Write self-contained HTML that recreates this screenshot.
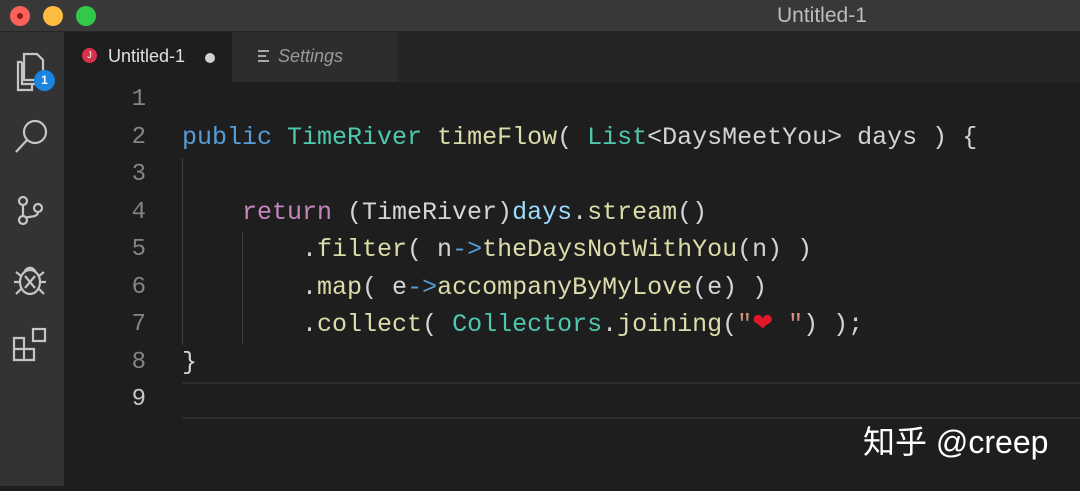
<!DOCTYPE html>
<html><head><style>
*{margin:0;padding:0;box-sizing:border-box}
body{width:1080px;height:486px;overflow:hidden;background:#1e1e1e;font-family:"Liberation Sans",sans-serif;position:relative}
.title{position:absolute;left:0;top:0;width:1080px;height:32px;background:#383838;border-bottom:1px solid #262626}
.dot{position:absolute;top:6px;width:20px;height:20px;border-radius:50%}
.title .t{position:absolute;left:777px;top:4px;color:#bdbdbd;font-size:21px}
.act{position:absolute;left:0;top:32px;width:64px;height:454px;background:#333333}
.tabs{position:absolute;left:64px;top:32px;width:1016px;height:50px;background:#252526}
.tab1{position:absolute;left:0;top:0;width:168px;height:50px;background:#1e1e1e}
.tab2{position:absolute;left:168px;top:0;width:166px;height:50px;background:#2d2d2d}
.code{position:absolute;left:0;top:81px;font-family:"Liberation Mono",monospace;font-size:25px;line-height:37.5px;color:#d4d4d4;white-space:pre}
.ln{position:absolute;left:100px;top:81px;width:46px;text-align:right;font-family:"Liberation Mono",monospace;font-size:24px;line-height:37.5px;color:#858585;white-space:pre}
.k{color:#569cd6}.ty{color:#4ec9b0}.f{color:#dcdcaa}.p{color:#c586c0}.v{color:#9cdcfe}.s{color:#ce9178}
</style></head><body>
<div class="title">
<div class="dot" style="left:10px;background:#fc605b"><div style="position:absolute;left:7px;top:7px;width:6px;height:6px;border-radius:50%;background:#8b1a14"></div></div>
<div class="dot" style="left:43px;background:#fdbc40"></div>
<div class="dot" style="left:76px;background:#34c84a"></div>
<div class="t">Untitled-1</div>
</div>
<div class="act">
<svg width="64" height="454" fill="none" stroke="#c5c5c5" stroke-width="2.2">
<path d="M22 30 V52 H36 M22 30 H18 V58 H32 V52"/>
<path d="M24 22 H37 L43 28 V48 H24 Z"/>
<circle cx="35" cy="100" r="11"/><path d="M27 108 L16 120"/>
<circle cx="23" cy="169" r="4"/><circle cx="23" cy="188" r="4"/><circle cx="38" cy="176" r="4"/><path d="M23 173 V184 M38 180 C38 186 28 184 25 186"/>
<ellipse cx="30" cy="250" rx="10" ry="12"/><path d="M24 241 C26 234 34 234 36 241 M25 244 L35 256 M35 244 L25 256 M14 250 H20 M40 250 H46 M16 240 L21 244 M44 240 L39 244 M16 262 L21 257 M44 262 L39 257"/>
<path d="M14 306 H24 V328 H14 Z M14 317 H34 V328 H24 M24 306 V317"/><rect x="33" y="297" width="12" height="12"/>
</svg>
<div style="position:absolute;left:34px;top:38px;width:21px;height:21px;border-radius:50%;background:#1a85e0;color:#fff;font-size:12px;font-weight:bold;text-align:center;line-height:21px">1</div>
</div>
<div class="tabs">
<div class="tab1">
<div style="position:absolute;left:18px;top:16px;width:15px;height:15px;border-radius:50%;background:#d6324a;color:#fff;font-size:9px;text-align:center;line-height:15px">J</div>
<div style="position:absolute;left:44px;top:14px;color:#e0e0e0;font-size:18px">Untitled-1</div>
<div style="position:absolute;left:141px;top:21px;width:10px;height:10px;border-radius:50%;background:#d0d0d0"></div>
</div>
<div class="tab2">
<div style="position:absolute;left:26px;top:18px;width:11px;height:12px;border-top:2px solid #aaa;border-bottom:2px solid #aaa"><div style="margin-top:3px;width:8px;border-top:2px solid #aaa"></div></div>
<div style="position:absolute;left:46px;top:14px;color:#9a9a9a;font-size:18px;font-style:italic">Settings</div>
</div>
</div>
<div style="position:absolute;left:182px;top:382px;width:898px;height:37px;border-top:2px solid #2c2c2c;border-bottom:2px solid #2c2c2c"></div>
<div style="position:absolute;left:182px;top:158px;width:1px;height:187px;background:#404040"></div>
<div style="position:absolute;left:242px;top:232px;width:1px;height:113px;background:#404040"></div>
<div class="ln">1
2
3
4
5
6
7
8
<span style="color:#c6c6c6">9</span></div>
<div class="code" style="left:182px">
<span class="k">public</span> <span class="ty">TimeRiver</span> <span class="f">timeFlow</span>( <span class="ty">List</span>&lt;DaysMeetYou&gt; days ) {

    <span class="p">return</span> (TimeRiver)<span class="v">days</span>.<span class="f">stream</span>()
        .<span class="f">filter</span>( n<span class="k">-&gt;</span><span class="f">theDaysNotWithYou</span>(n) )
        .<span class="f">map</span>( e<span class="k">-&gt;</span><span class="f">accompanyByMyLove</span>(e) )
        .<span class="f">collect</span>( <span class="ty">Collectors</span>.<span class="f">joining</span>(<span class="s">"<span style="color:#e0182a">❤</span> "</span>) );
}
</div>
<div style="position:absolute;left:863px;top:417px;color:#fff;font-size:32px;font-family:'Liberation Sans','Noto Sans CJK SC',sans-serif">知乎 @creep</div>
</body></html>
